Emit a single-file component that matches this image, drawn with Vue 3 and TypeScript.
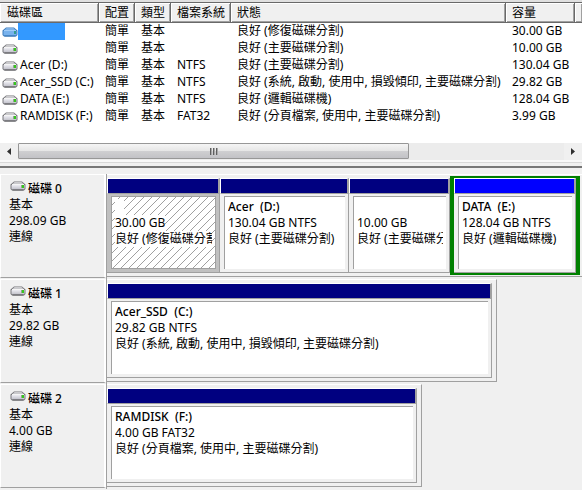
<script setup lang="ts">
interface Volume {
  name: string
  layout: string
  type: string
  fs: string
  status: string
  capacity: string
  selected?: boolean
}

interface Partition {
  name: string
  size: string
  status: string
  weight: number
  kind?: 'hatched' | 'logical'
}

interface Disk {
  label: string
  type: string
  size: string
  state: string
  weight: number
  rest: number
  partitions: Partition[]
}

const headers: string[] = ['磁碟區', '配置', '類型', '檔案系統', '狀態', '容量', '']

const volumes: Volume[] = [
  { name: '', layout: '簡單', type: '基本', fs: '', status: '良好 (修復磁碟分割)', capacity: '30.00 GB', selected: true },
  { name: '', layout: '簡單', type: '基本', fs: '', status: '良好 (主要磁碟分割)', capacity: '10.00 GB' },
  { name: 'Acer (D:)', layout: '簡單', type: '基本', fs: 'NTFS', status: '良好 (主要磁碟分割)', capacity: '130.04 GB' },
  { name: 'Acer_SSD (C:)', layout: '簡單', type: '基本', fs: 'NTFS', status: '良好 (系統, 啟動, 使用中, 損毀傾印, 主要磁碟分割)', capacity: '29.82 GB' },
  { name: 'DATA (E:)', layout: '簡單', type: '基本', fs: 'NTFS', status: '良好 (邏輯磁碟機)', capacity: '128.04 GB' },
  { name: 'RAMDISK (F:)', layout: '簡單', type: '基本', fs: 'FAT32', status: '良好 (分頁檔案, 使用中, 主要磁碟分割)', capacity: '3.99 GB' },
]

const disks: Disk[] = [
  {
    label: '磁碟 0', type: '基本', size: '298.09 GB', state: '連線', weight: 475, rest: 0,
    partitions: [
      { name: '   ', size: '30.00 GB', status: '良好 (修復磁碟分割)', weight: 113, kind: 'hatched' },
      { name: 'Acer  (D:)', size: '130.04 GB NTFS', status: '良好 (主要磁碟分割)', weight: 129 },
      { name: '', size: '10.00 GB', status: '良好 (主要磁碟分割)', weight: 101 },
      { name: 'DATA  (E:)', size: '128.04 GB NTFS', status: '良好 (邏輯磁碟機)', weight: 130, kind: 'logical' },
    ],
  },
  {
    label: '磁碟 1', type: '基本', size: '29.82 GB', state: '連線', weight: 390, rest: 85,
    partitions: [
      { name: 'Acer_SSD  (C:)', size: '29.82 GB NTFS', status: '良好 (系統, 啟動, 使用中, 損毀傾印, 主要磁碟分割)', weight: 1 },
    ],
  },
  {
    label: '磁碟 2', type: '基本', size: '4.00 GB', state: '連線', weight: 315, rest: 160,
    partitions: [
      { name: 'RAMDISK  (F:)', size: '4.00 GB FAT32', status: '良好 (分頁檔案, 使用中, 主要磁碟分割)', weight: 1 },
    ],
  },
]

const columns = (weights: number[]): string =>
  weights.filter((w) => w > 0).map((w) => `minmax(0, ${w}fr)`).join(' ')
</script>

<template>
  <svg class="defs" aria-hidden="true">
    <defs>
      <linearGradient id="front" x1="0" y1="0" x2="0" y2="1">
        <stop offset="0" stop-color="#ececf2" />
        <stop offset="1" stop-color="#bfbfc8" />
      </linearGradient>
      <symbol id="drive" viewBox="0 0 16 10">
        <path d="M4 .5h8l3.500 3v4.500l-1.500 1.500H2L.5 8V3.500z" fill="#77777b" />
        <path d="M4.500 1h7l2.500 2.500H2z" fill="#c9c9cc" />
        <path d="M1.500 4h13v3.500l-1 1h-11l-1-1z" fill="url(#front)" />
        <path d="M2 3.500h12" stroke="#f4f4f4" />
        <path d="M2.500 9h11" stroke="#5c5c60" />
        <rect x="12" y="4" width="2" height="3" fill="#35c61d" />
        <rect x="11" y="4" width="1" height="3" fill="#91a58e" />
      </symbol>
      <symbol id="drive-selected" viewBox="0 0 16 10">
        <path d="M4 .5h8l3.500 3v4.500l-1.500 1.500H2L.5 8V3.500z" fill="#3c7cbc" />
        <path d="M4.500 1h7l2.500 2.500H2z" fill="#7db1e6" />
        <path d="M1.500 4h13v3.500l-1 1h-11l-1-1z" fill="#78b2ed" />
        <path d="M2 3.500h12" stroke="#a2cdf8" />
        <path d="M2.500 9h11" stroke="#3474b4" />
        <rect x="12" y="4" width="2" height="3" fill="#349d90" />
      </symbol>
    </defs>
  </svg>

  <main class="manager">
    <section class="volumes">
      <table>
        <colgroup>
          <col class="c-name" /><col class="c-short" /><col class="c-short" /><col class="c-fs" />
          <col /><col class="c-size" /><col class="c-more" />
        </colgroup>
        <thead>
          <tr>
            <th v-for="(h, i) in headers" :key="i" scope="col">{{ h }}</th>
          </tr>
        </thead>
        <tbody>
          <tr v-for="(v, i) in volumes" :key="i">
            <td class="name">
              <div class="volume">
                <svg class="drive"><use :href="v.selected ? '#drive-selected' : '#drive'" /></svg>
                <span :class="{ selected: v.selected }">{{ v.name }}</span>
              </div>
            </td>
            <td>{{ v.layout }}</td>
            <td>{{ v.type }}</td>
            <td>{{ v.fs }}</td>
            <td>{{ v.status }}</td>
            <td>{{ v.capacity }}</td>
            <td></td>
          </tr>
        </tbody>
      </table>
      <div class="scrollbar">
        <button type="button" class="arrow" aria-label="◀">
          <svg width="4" height="7" viewBox="0 0 4 7"><path d="M4 0v7L0 3.500z" fill="#303030" /></svg>
        </button>
        <div class="track">
          <div class="thumb"><i></i><i></i><i></i></div>
        </div>
        <button type="button" class="arrow" aria-label="▶">
          <svg width="4" height="7" viewBox="0 0 4 7"><path d="M0 0v7l4-3.500z" fill="#303030" /></svg>
        </button>
      </div>
    </section>

    <div class="splitter"></div>

    <section class="disks">
      <article v-for="d in disks" :key="d.label" class="disk">
        <div class="label">
          <h2><svg class="drive"><use href="#drive" /></svg>{{ d.label }}</h2>
          <p>{{ d.type }}</p>
          <p>{{ d.size }}</p>
          <p>{{ d.state }}</p>
        </div>
        <div class="map" :style="{ gridTemplateColumns: columns([d.weight, d.rest]) }">
          <div
            class="strip"
            :class="{ full: d.rest === 0 }"
            :style="{ gridTemplateColumns: columns(d.partitions.map((p) => p.weight)) }"
          >
            <div v-for="(p, i) in d.partitions" :key="i" class="partition" :class="p.kind">
              <div class="bar"></div>
              <div class="body">
                <div class="info">
                  <p class="title"><span>{{ p.name }}</span></p>
                  <p><span>{{ p.size }}</span></p>
                  <p><span>{{ p.status }}</span></p>
                </div>
              </div>
            </div>
          </div>
        </div>
      </article>
    </section>
  </main>
</template>

<style>
body {
  background: #f0f0f0;
}
</style>

<style scoped>
.defs {
  position: absolute;
  width: 0;
  height: 0;
}

.manager {
  font: 12px/16px "Noto Sans", "Noto Sans CJK TC", sans-serif;
  color: #000;
  overflow: hidden;
}

h2,
p {
  margin: 0;
  font-size: 12px;
  white-space: pre;
}

.drive {
  width: 16px;
  height: 10px;
  flex: none;
}

.volumes {
  background: #fff;
  border-top: 2px solid #e0e0e0;
}

table {
  width: 100%;
  table-layout: fixed;
  border-collapse: separate;
  border-spacing: 0;
  margin-bottom: 18px;
}

.c-name { width: 99px; }
.c-short { width: 36px; }
.c-fs { width: 60px; }
.c-size { width: 69px; }
.c-more { width: 7px; }

th,
td {
  box-sizing: border-box;
  padding: 0 0 0 6px;
  text-align: left;
  font-weight: 400;
  white-space: nowrap;
  overflow: hidden;
}

th {
  height: 21px;
  line-height: 19px;
  background: #f0f0f0;
  border-top: 1px solid #696969;
  border-bottom: 1px solid #696969;
  border-right: 1px solid #696969;
  box-shadow: inset 1px 1px #fff, inset -1px -1px #a0a0a0;
}

th:first-child {
  padding-left: 7px;
}

th:last-child {
  border-right: 0;
}

td {
  height: 17px;
  line-height: 15px;
  vertical-align: top;
}

td.name {
  padding-left: 2px;
}

.volume {
  display: flex;
  gap: 2px;
  height: 17px;
}

.volume .drive {
  margin-top: 4px;
}

.volume .selected {
  width: 47px;
  height: 17px;
  margin-left: -2px;
  background: #39f;
}

.scrollbar {
  display: flex;
  height: 17px;
  background: #ececec;
  border-bottom: 2px solid #f8f8f8;
}

.arrow {
  width: 18px;
  padding: 0;
  border: 0;
  background: #f0f0f0;
  display: flex;
  align-items: center;
  justify-content: center;
}

.track {
  flex: 1;
  display: grid;
  grid-template-columns: 391fr 155fr;
}

.thumb {
  box-sizing: border-box;
  height: 16px;
  border: 1px solid #979797;
  border-radius: 1px;
  background: linear-gradient(#f5f5f5, #e6e6e6 48%, #cfcfd1 52%, #c2c2c6);
  display: flex;
  align-items: center;
  justify-content: center;
  gap: 1px;
}

.thumb i {
  width: 2px;
  height: 7px;
  background: linear-gradient(90deg, #606060 50%, #a8a8a8 50%);
}

.splitter {
  height: 6px;
  box-sizing: border-box;
  background: #f0f0f0;
  border-top: 1px solid #d8d8d8;
  border-bottom: 2px solid #777;
  margin-bottom: 6px;
}

.disks {
  display: flex;
  flex-direction: column;
}

.disk {
  display: flex;
  height: 105px;
}

.label {
  box-sizing: border-box;
  flex: none;
  width: 106px;
  height: 104px;
  padding: 6px 0 0 8px;
  border-left: 1px solid #fff;
  border-right: 2px solid #fff;
  border-top: 1px solid #fff;
  border-bottom: 1px solid #a0a0a0;
}

.label h2 {
  display: flex;
  gap: 2px;
  padding-left: 1px;
  font-weight: 500;
}

.map {
  flex: 1;
  min-width: 0;
  display: grid;
  border-left: 1px solid #a0a0a0;
}

.strip {
  box-sizing: border-box;
  height: 103px;
  display: grid;
  padding: 1px 4px 1px 0;
  border-top: 1px solid #fff;
  border-right: 1px solid #a0a0a0;
  border-bottom: 1px solid #a0a0a0;
}

.strip.full {
  padding-right: 2px;
  border-right: 0;
}

.partition {
  box-sizing: border-box;
  min-width: 0;
  display: flex;
  flex-direction: column;
  border: solid transparent;
  border-width: 2px 0;
}

.partition.logical {
  border: solid #008000;
  border-width: 2px 4px;
}

.bar {
  height: 14px;
  background: #000080;
  border: 1px solid #fff;
  border-right: 2px solid #a0a0a0;
  border-bottom-color: #a0a0a0;
}

.logical .bar {
  background: #00f;
}

.body {
  flex: 1;
  min-height: 0;
  display: flex;
  padding: 2px 3px 3px 4px;
  border-right: 1px solid #a0a0a0;
  border-bottom: 1px solid #a0a0a0;
}

.info {
  flex: 1;
  min-width: 0;
  overflow: hidden;
  padding: 2px 3px 0 3px;
  background: #fff;
  border-top: 1px solid #a0a0a0;
  border-left: 1px solid #a0a0a0;
}

.info p {
  height: 16px;
  overflow: hidden;
}

.title {
  font-weight: 500;
}

.hatched .body {
  background: #c0c0c0;
}

.hatched .info {
  border: 1px solid #a0a0a0;
  background: #fff linear-gradient(135deg, #fff 46%, #a0a0a0 46%, #a0a0a0 54%, #fff 54%) 0 0 / 8px 8px;
}

.hatched .info span {
  display: inline-block;
  background: #fff;
}
</style>
